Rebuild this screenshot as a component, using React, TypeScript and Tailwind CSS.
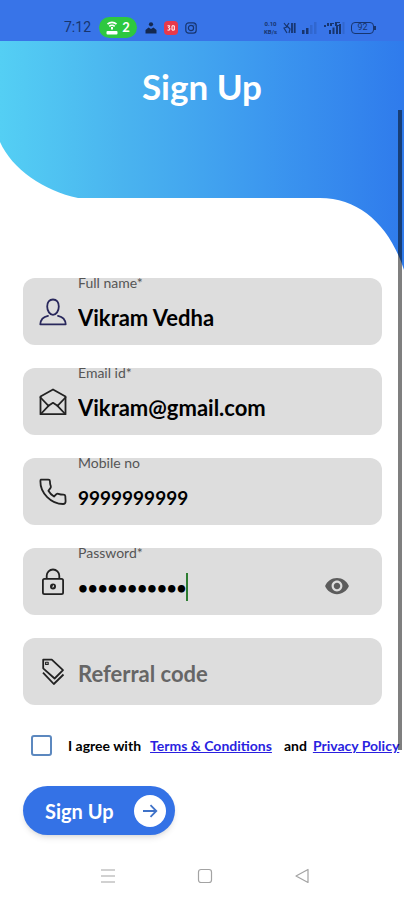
import { useState } from 'react';
import type { ReactNode } from 'react';
import { MdVisibility } from 'react-icons/md';

type FieldProps = {
  id: string;
  label: string;
  icon: ReactNode;
  value: string;
  onChange: (value: string) => void;
  type?: string;
  textSize?: string;
};

const INPUT_CLASS =
  'h-[34px] bg-transparent p-0 font-bold text-black outline-none placeholder:text-[#666666] placeholder:opacity-100';

function UserIcon() {
  return (
    <svg className="size-7 shrink-0" viewBox="0 0 28 28" fill="none" stroke="#29285c" strokeWidth="1.8" strokeLinejoin="round" strokeLinecap="round">
      <path d="M14 1.500c-3.600 0-5.800 2.800-5.800 6.900 0 4.700 2.700 8.400 5.800 8.400s5.800-3.700 5.800-8.400c0-4.100-2.200-6.900-5.800-6.900Z" />
      <path d="M9 17.800c-5.200 1-7.400 3.200-7.700 8.500h25.400c-.3-5.300-2.500-7.500-7.700-8.500" />
    </svg>
  );
}

function MailIcon() {
  return (
    <svg className="size-7 shrink-0" viewBox="0 0 28 28" fill="none" stroke="#222222" strokeWidth="1.8" strokeLinejoin="round" strokeLinecap="round">
      <path d="M1.500 8.500 14 1.500l12.500 7v17.700h-25Z" />
      <path d="m1.500 9.500 8 8.300 4.500-3 4.500 3 8-8.300" />
      <path d="m1.800 26 7.700-8.200M26.200 26l-7.700-8.200" />
    </svg>
  );
}

function PhoneIcon() {
  return (
    <svg className="size-7 shrink-0" viewBox="0 0 28 28" fill="none" stroke="#222222" strokeWidth="1.8" strokeLinejoin="round" strokeLinecap="round">
      <path d="M2 1.600h7.400c1 0 1.500.6 1.500 1.500 0 2.200.3 3.600.9 5.100.3.800.1 1.300-.4 1.900l-2 2.700c1.200 2.200 3.200 4.200 5.600 5.700l2.400-2.300c.6-.5 1.100-.6 1.900-.4 1.500.5 3.200.8 5.200.8 1 0 1.700.5 1.800 1.400l.3 5.200c0 1.500-1.100 2.800-2.600 2.800C12.300 26 1.100 15.200 1.400 3c0-.8.200-1.200.6-1.400Z" />
    </svg>
  );
}

function LockIcon() {
  return (
    <svg className="size-7 shrink-0" viewBox="0 0 28 28" fill="none" stroke="#222222" strokeWidth="1.8">
      <rect x="3.900" y="10.900" width="20.200" height="15.300" rx="1.600" />
      <path d="M7.700 10.900V7.800a6.300 6.300 0 0 1 12.600 0v3.100" />
      <circle cx="14" cy="18.500" r="3" fill="#222222" stroke="none" />
      <path d="M14.400 17.200v1.800h-1.200" stroke="#dddddd" strokeWidth="1" />
    </svg>
  );
}

function TagIcon() {
  return (
    <svg className="size-7 shrink-0" viewBox="0 0 28 28" fill="none" stroke="#222222" strokeWidth="1.8" strokeLinejoin="round">
      <path d="M4.200 1.600h8.600L24 12.200l-8.400 8.300L4.200 10.300Z" />
      <path d="M4 14.600 14.800 26 24.500 16.500" />
      <rect x="6.600" y="4.200" width="2.600" height="2.200" strokeWidth="1.100" />
    </svg>
  );
}

function Field({ id, label, icon, value, onChange, type = 'text', textSize = 'text-[22px]' }: FieldProps) {
  const isPassword = type === 'password';

  return (
    <div className="flex h-[67px] items-center gap-[11px] rounded-xl bg-[#dddddd] pl-4 pr-8">
      {icon}
      <div className="flex h-full min-w-0 flex-1 flex-col">
        <label htmlFor={id} className="text-[14px] leading-[10px] text-[#555555]">
          {label}
        </label>
        <div className="mt-3 flex items-center">
          <input
            id={id}
            type={type}
            value={value}
            onChange={(e) => onChange(e.target.value)}
            className={`${INPUT_CLASS} ${textSize} ${isPassword ? 'field-sizing-content' : 'w-full'}`}
          />
          {isPassword && <span className="h-7 w-[2px] bg-[#2d7d32]" />}
        </div>
      </div>
      {isPassword && (
        <button type="button" aria-label="Show password" className="pt-2 text-[#5c5c5c]">
          <MdVisibility className="size-[26px]" />
        </button>
      )}
    </div>
  );
}

function StatusBar() {
  return (
    <div className="flex h-[41px] items-center bg-[#3874e8] pl-16 pr-7 pt-[14px] text-[#17356f]">
      <span className="font-['Roboto'] text-[14px]">7:12</span>
      <span className="ml-2 flex h-[21px] w-[38px] items-center justify-center gap-1 rounded-full bg-[#2dc840] text-white">
        <svg className="h-[14px] w-3" viewBox="0 0 12 14" fill="none" stroke="currentColor">
          <path d="M1.500 3.200C4 .7 8 .7 10.500 3.200M3.300 5.400c1.500-1.500 3.900-1.500 5.400 0" strokeWidth="1.700" />
          <path d="M6 6v2.500" strokeWidth="2" />
          <rect x=".5" y="10" width="11" height="3.500" rx="1" fill="currentColor" stroke="none" />
        </svg>
        <span className="text-[13px] font-bold">2</span>
      </span>
      <svg className="ml-2 size-3" viewBox="0 0 12 12" fill="#142850">
        <circle cx="6" cy="2.300" r="2.100" />
        <path d="M.5 11.500V8L3.600 5.500 6 7l2.400-1.500L11.500 8v3.500Z" />
      </svg>
      <span className="ml-[7px] flex size-[14px] items-center justify-center rounded bg-[#e8394a]">
        <svg className="h-[6px] w-2" viewBox="0 0 8 6" fill="none" stroke="#ffffff">
          <path d="M.5.800h2.300L1.500 2.700l1.400.4-.3 2H.5M5 .8h2.300v4.300H5Z" />
        </svg>
      </span>
      <svg className="ml-[7px] size-3" viewBox="0 0 12 12" fill="none" stroke="currentColor" strokeWidth="1.200">
        <rect x=".8" y=".8" width="10.400" height="10.400" rx="3" />
        <circle cx="6" cy="6" r="2.600" />
        <path d="M8.700 3h.8" />
      </svg>
      <div className="ml-auto flex items-center gap-[6px]">
        <span className="flex flex-col text-center font-['Roboto'] text-[6px] font-bold leading-[8px]">
          <span>0.10</span>
          <span>KB/s</span>
        </span>
        <svg className="h-3 w-[13px]" viewBox="0 0 13 12" fill="none" stroke="currentColor" strokeWidth="1.200">
          <path d="M1 1l3 4-3 1 3 5M6 1 4 4l3 3-1 4" />
          <path d="M9 1v10M11.700 1v10" strokeWidth="1.800" />
        </svg>
        <svg className="h-3 w-4" viewBox="0 0 16 12" fill="#17356f">
          <rect y="8" width="2.500" height="4" />
          <rect x="4" y="6" width="2.500" height="6" />
          <rect x="8" y="3" width="2.500" height="9" fillOpacity=".2" />
          <rect x="12" width="2.500" height="12" fillOpacity=".2" />
        </svg>
        <svg className="h-3 w-[21px]" viewBox="0 0 21 12" fill="#17356f">
          <path d="M0 3h2v2H0ZM3 1h2v3H3ZM6 1h4v1H8v2H6ZM11 0h5v1h-3v2h3v1h-5Z" />
          <rect x="5" y="8" width="2" height="4" />
          <rect x="8.500" y="5.500" width="2" height="6.500" />
          <rect x="12" y="4" width="2" height="8" />
          <rect x="15" y="2" width="2" height="10" />
          <rect x="18.500" width="2" height="12" fillOpacity=".2" />
        </svg>
        <span className="flex items-center">
          <span className="flex h-3 w-[23px] items-center justify-center rounded-sm border border-[#17356f] font-['Roboto'] text-[9px] leading-none">
            92
          </span>
          <span className="h-1 w-[2px] bg-[#17356f]" />
        </span>
      </div>
    </div>
  );
}

export default function App() {
  const [name, setName] = useState('Vikram Vedha');
  const [email, setEmail] = useState('Vikram@gmail.com');
  const [mobile, setMobile] = useState('9999999999');
  const [password, setPassword] = useState('vikram12345');
  const [referral, setReferral] = useState('');
  const [agreed, setAgreed] = useState(false);

  return (
    <div className="relative min-h-screen overflow-hidden bg-white font-['Lato',sans-serif]">
      <StatusBar />

      {/* Header */}
      <header className="relative h-[229px]">
        <svg className="absolute inset-0 size-full" viewBox="0 0 404 229" preserveAspectRatio="none">
          <defs>
            <linearGradient id="wave" x1="0" x2="1" y1="0" y2="0">
              <stop offset="0" stopColor="#54cff4" />
              <stop offset=".3" stopColor="#4ab4ef" />
              <stop offset=".65" stopColor="#3c98ef" />
              <stop offset="1" stopColor="#2f7bec" />
            </linearGradient>
          </defs>
          <path d="M0 0H404V229C390 185 360 157 320 157H78C44 150 12 128 0 101Z" fill="url(#wave)" />
        </svg>
        <h1 className="relative pt-6 text-center text-[35px] font-bold leading-[42px] text-white">Sign Up</h1>
      </header>

      {/* Form */}
      <form className="pl-[23px] pr-[22px] pt-2" onSubmit={(e) => e.preventDefault()}>
        <div className="flex flex-col gap-[23px]">
          <Field id="name" label="Full name*" icon={<UserIcon />} value={name} onChange={setName} />
          <Field id="email" label="Email id*" icon={<MailIcon />} value={email} onChange={setEmail} />
          <Field
            id="mobile"
            label="Mobile no"
            icon={<PhoneIcon />}
            value={mobile}
            onChange={setMobile}
            textSize="text-[19px]"
          />
          <Field
            id="password"
            label="Password*"
            icon={<LockIcon />}
            value={password}
            onChange={setPassword}
            type="password"
            textSize="text-[17px]"
          />
          <div className="flex h-[67px] items-center gap-[11px] rounded-xl bg-[#dddddd] pl-4 pr-8">
            <TagIcon />
            <div className="min-w-0 flex-1 pt-1">
              <input
                aria-label="Referral code"
                placeholder="Referral code"
                value={referral}
                onChange={(e) => setReferral(e.target.value)}
                className={`${INPUT_CLASS} w-full text-[22px]`}
              />
            </div>
          </div>
        </div>

        {/* Terms */}
        <div className="mt-[30px] flex items-center whitespace-nowrap pl-2 text-[14px] font-bold leading-[21px] text-black">
          <input
            id="agree"
            type="checkbox"
            checked={agreed}
            onChange={(e) => setAgreed(e.target.checked)}
            className="size-[21px] shrink-0 appearance-none rounded-[3px] border-2 border-[#5c88bf] bg-white checked:bg-[#3874e8]"
          />
          <label htmlFor="agree" className="ml-4">
            I agree with
          </label>
          <a href="#terms" className="ml-[9px] text-[#2a1fe0] underline">
            Terms &amp; Conditions
          </a>
          <span className="ml-3">and</span>
          <a href="#privacy" className="ml-[6px] text-[#2a1fe0] underline">
            Privacy Policy
          </a>
        </div>

        <button
          type="submit"
          className="mt-[30px] flex h-[49px] w-[152px] items-center justify-between rounded-full bg-[#3472e6] pl-[22px] pr-[9px] text-[20px] font-bold text-white shadow-md"
        >
          Sign Up
          <span className="flex size-8 items-center justify-center rounded-full bg-white">
            <svg className="size-4" viewBox="0 0 16 16" fill="none" stroke="#3f72c8" strokeWidth="1.800">
              <path d="M1 8h13M8.500 2.200 14.300 8l-5.800 5.800" />
            </svg>
          </span>
        </button>
      </form>

      {/* System navigation */}
      <nav className="mt-[33px] flex items-center justify-center gap-[81px] pb-4 pl-[5px] text-[#a3a3a3]">
        <button type="button" aria-label="Recent apps">
          <svg className="size-4" viewBox="0 0 16 16" stroke="currentColor" strokeWidth="1.200">
            <path d="M1 2h14M1 8h14M1 14h14" />
          </svg>
        </button>
        <button type="button" aria-label="Home">
          <svg className="size-4" viewBox="0 0 16 16" fill="none" stroke="currentColor" strokeWidth="1.200">
            <rect x="1.500" y="1.500" width="13" height="13" rx="2.500" />
          </svg>
        </button>
        <button type="button" aria-label="Back">
          <svg className="size-4" viewBox="0 0 16 16" fill="none" stroke="currentColor" strokeWidth="1.200" strokeLinejoin="round">
            <path d="M14 1.500v13L2 8Z" />
          </svg>
        </button>
      </nav>

      {/* Scroll thumb */}
      <div className="absolute right-[2px] top-[110px] h-160 w-1 bg-black/50" />
    </div>
  );
}
